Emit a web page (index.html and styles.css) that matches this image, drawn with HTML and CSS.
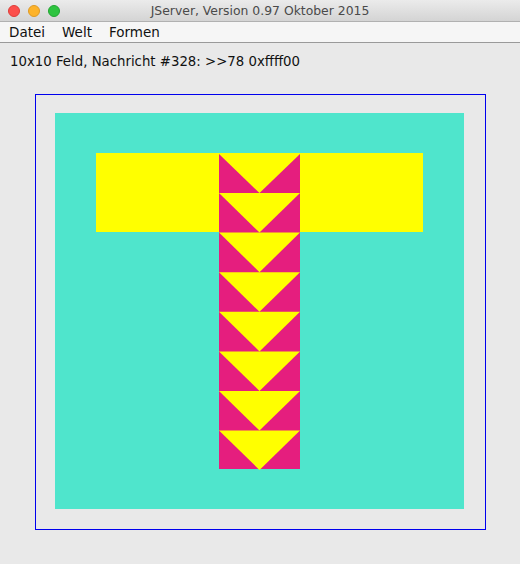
FILE: index.html
```html
<!DOCTYPE html>
<html>
<head>
<meta charset="utf-8">
<link rel="stylesheet" href="styles.css">
</head>
<body>
<div class="titlebar">
  <div class="lights">
    <span class="light red"></span>
    <span class="light yellow"></span>
    <span class="light green"></span>
  </div>
  <div class="title">JServer, Version 0.97 Oktober 2015</div>
</div>
<div class="menubar">
  <span class="menu m1">Datei</span>
  <span class="menu m2">Welt</span>
  <span class="menu m3">Formen</span>
</div>
<div class="status">10x10 Feld, Nachricht #328: &gt;&gt;78 0xffff00</div>
<div class="frame">
  <svg class="board" width="409" height="396" viewBox="0 0 409 396">
    <rect x="0" y="0" width="409" height="396" fill="#4fe5cc"/>
    <rect x="41" y="40" width="327" height="79" fill="#ffff00"/>
    <rect x="164" y="41" width="81" height="315" fill="#e51e7e"/>
    <polygon points="164,41 245,41 204.5,80" fill="#ffff00"/>
    <polygon points="164,80 245,80 204.5,119.6" fill="#ffff00"/>
    <polygon points="164,119.6 245,119.6 204.5,159.2" fill="#ffff00"/>
    <polygon points="164,159.2 245,159.2 204.5,198.8" fill="#ffff00"/>
    <polygon points="164,198.8 245,198.8 204.5,238.4" fill="#ffff00"/>
    <polygon points="164,238.4 245,238.4 204.5,278" fill="#ffff00"/>
    <polygon points="164,278 245,278 204.5,317.6" fill="#ffff00"/>
    <polygon points="164,317.6 245,317.6 204.5,357" fill="#ffff00"/>
  </svg>
</div>
</body>
</html>
```
FILE: styles.css
```css
html, body {
  margin: 0;
  padding: 0;
  background: #e9e9e9;
  width: 520px;
  height: 564px;
  overflow: hidden;
  font-family: "DejaVu Sans", "Liberation Sans", sans-serif;
}
.titlebar {
  height: 22px;
  box-sizing: border-box;
  background: linear-gradient(#ebebeb, #d4d4d4);
  border-bottom: 1px solid #b1b1b1;
  display: flex;
  align-items: center;
  position: relative;
}
.lights {
  display: flex;
  gap: 8px;
  padding-left: 8px;
}
.light {
  width: 12px;
  height: 12px;
  border-radius: 50%;
  box-sizing: border-box;
}
.red { background: #fc4f4b; border: 1px solid #de3d38; }
.yellow { background: #fdb32a; border: 1px solid #de9a24; }
.green { background: #2ec440; border: 1px solid #22a532; }
.title {
  position: absolute;
  left: 0;
  right: 0;
  top: 3px;
  text-align: center;
  font-size: 12.4px;
  color: #4a4a4a;
}
.menubar {
  height: 21px;
  box-sizing: border-box;
  background: #f6f6f6;
  border-bottom: 1px solid #9a9a9a;
  font-size: 13.5px;
  color: #111;
  display: flex;
  align-items: center;
  padding-left: 9px;
}
.menu { line-height: 20px; }
.m2 { margin-left: 17px; }
.m3 { margin-left: 17px; }
.status {
  font-size: 13.3px;
  color: #111;
  padding: 10px 0 0 10px;
  height: 17px;
  line-height: 17px;
}
.frame {
  margin: 24px 0 0 35px;
  width: 451px;
  height: 436px;
  box-sizing: border-box;
  border: 1px solid #0000ee;
  padding: 18px 0 0 19px;
}
.board { display: block; }
```
